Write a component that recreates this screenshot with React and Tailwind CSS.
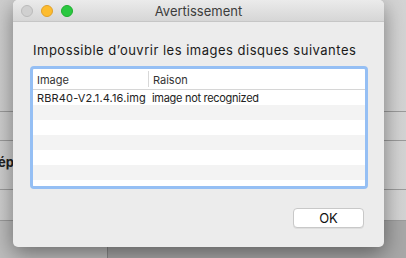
export default function App() {
  const rows = [
    { img: "RBR40-V2.1.4.16.img", reason: "image not recognized" },
    {}, {}, {}, {}, {}, {},
  ];
  return (
    <div
      className="relative w-[406px] h-[258px] overflow-hidden bg-[#dcdcdc]"
      style={{ fontFamily: "Inter, 'Liberation Sans', sans-serif" }}
    >
      {/* background window */}
      <div className="absolute inset-0 flex flex-col bg-gradient-to-r from-[#cfcfcf] via-[#ececec] to-[#d4d4d4]">
        <div className="h-[112px] border-b border-[#9c9c9c]" />
        <div className="h-[29px] border-b border-[#9c9c9c]" />
        <div className="h-[49px] border-b border-[#9c9c9c] flex items-center pb-[4px]">
          <span className="text-[13px] font-bold text-[#222] -ml-[2px]">ép</span>
        </div>
        <div className="h-[31px] border-b border-[#9c9c9c]" />
        <div className="flex-1 flex bg-[#bdbdbd]">
          <div className="w-[108px] border-r border-[#8a8a8a]" />
          <div className="flex-1 bg-[#a8a8a8]" />
        </div>
      </div>

      {/* dialog window */}
      <div className="absolute left-[13px] top-0 w-[371px] h-[247px] rounded-[5px] bg-[#ececec] shadow-[0_6px_22px_rgba(0,0,0,0.45)] flex flex-col overflow-hidden">
        <div className="h-[22px] shrink-0 grid grid-cols-[1fr_auto_1fr] items-center border-b border-[#c6c6c6] bg-gradient-to-b from-[#ebebeb] to-[#d6d6d6]">
          <div className="flex items-center gap-[8px] pl-[8px]">
            <span className="w-[12px] h-[12px] rounded-full bg-[#d0d0d0] border border-[#bababa]" />
            <span className="w-[12px] h-[12px] rounded-full bg-[#fdbc2e] border border-[#e0a02a]" />
            <span className="w-[12px] h-[12px] rounded-full bg-[#2ac840] border border-[#1fae2e]" />
          </div>
          <div className="text-[13px] text-[#3c3c3c] leading-none pt-[1px]">Avertissement</div>
          <div />
        </div>

        <div className="flex flex-col px-[17px] pt-[20px]">
          <div className="text-[13px] tracking-[0.5px] text-[#1a1a1a] leading-[16px] pl-[3px]">
            Impossible d’ouvrir les images disques suivantes
          </div>
          <div className="mt-[8px] h-[123px] w-[338px] rounded-[4px] border-[3px] border-[#95bff4] bg-white overflow-hidden flex flex-col">
            <div className="h-[21px] shrink-0 flex items-center border-b border-[#d6d6d6] text-[11px] text-[#333] pt-[2px]">
              <div className="w-[115px] pl-[4px]">Image</div>
              <div className="h-[16px] w-px bg-[#d8d8d8] -mt-[2px]" />
              <div className="pl-[4px]">Raison</div>
            </div>
            {rows.map((r, i) => (
              <div
                key={i}
                className={`h-[15px] shrink-0 flex items-center text-[11px] text-[#222] pt-[2px] ${i % 2 === 0 ? "bg-white" : "bg-[#f3f3f3]"}`}
              >
                <div className="w-[115px] pl-[4px] tracking-[0.15px]">{r.img}</div>
                <div className="pl-[4px] tracking-[-0.3px]">{r.reason}</div>
              </div>
            ))}
          </div>
        </div>

        <div className="flex justify-end pr-[20px] mt-[19px]">
          <button className="w-[71px] h-[20px] rounded-[4px] bg-white border border-[#c8c8c8] shadow-[0_1px_0_rgba(0,0,0,0.06)] text-[13px] text-[#111] leading-none">
            OK
          </button>
        </div>
      </div>
    </div>
  );
}
